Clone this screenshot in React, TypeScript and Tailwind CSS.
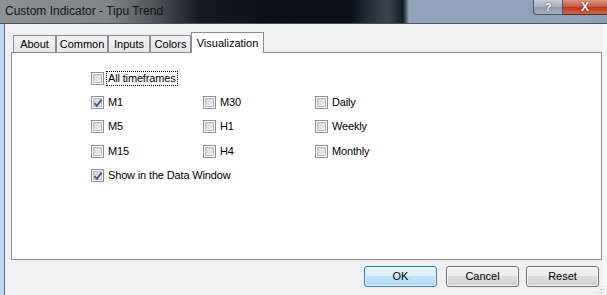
import React from "react";

const ui = { fontFamily: '"Liberation Sans", Arial, sans-serif' };

function Box({ checked }: { checked?: boolean }) {
    return (
        <span className="relative flex h-[13px] w-[13px] shrink-0 items-center justify-center border border-[#8e8f8f] bg-white">
            <span className="h-[9px] w-[9px] border border-[#b9bdc3] bg-[linear-gradient(135deg,#cfd2d7_0%,#e6e8eb_60%,#f5f5f5_100%)]" />
            {checked && (
                <svg className="absolute left-[1px] top-[1px]" width="10" height="10" viewBox="0 0 10 10">
                    <path d="M1.5 5.2 L3.8 7.8 L8.6 1.6" fill="none" stroke="#3e5591" strokeWidth="1.8" />
                </svg>
            )}
        </span>
    );
}

function Check({ label, checked, focus }: { label: string; checked?: boolean; focus?: boolean }) {
    return (
        <div className="flex items-center gap-[2px] tracking-[-0.15px]">
            <Box checked={checked} />
            <span className={focus ? "border border-dotted border-black px-[1px] leading-[13px]" : "px-[2px] leading-[13px]"}>{label}</span>
        </div>
    );
}

function Tab({ label, w }: { label: string; w: string }) {
    return (
        <div className={`${w} flex h-[17px] items-center justify-center border border-b-0 border-[#898c95] bg-[linear-gradient(#f3f3f3,#e6e6e6)] pt-px text-[11px]`}>
            {label}
        </div>
    );
}

function Btn({ label, primary }: { label: string; primary?: boolean }) {
    return (
        <div
            className={
                primary
                    ? "flex h-[21px] w-[73px] items-center justify-center rounded-[3px] border border-[#3c7fb1] bg-[linear-gradient(#ecf7fd_0%,#dcf0fc_45%,#c1e4f8_50%,#b0dbf5_100%)] text-[11px] shadow-[inset_0_0_0_1px_#dff2fc]"
                    : "flex h-[21px] w-[73px] items-center justify-center rounded-[3px] border border-[#707070] bg-[linear-gradient(#f2f2f2_0%,#ebebeb_45%,#dddddd_50%,#cfcfcf_100%)] text-[11px] shadow-[inset_0_0_0_1px_#fbfbfb]"
            }
        >
            {label}
        </div>
    );
}

export default function App() {
    return (
        <div className="relative flex h-[295px] w-[607px] flex-col overflow-hidden text-black" style={ui}>
            {/* title bar */}
            <div className="relative h-[24px] shrink-0 border-b border-[#4b4f56] bg-[linear-gradient(90deg,#8d9296_0%,#80858a_18%,#4a5056_26%,#131920_33%,#0c1118_45%,#0d121a_58%,#27313c_61%,#3a4652_64%,#141b23_66.4%,#8fa3ba_67.4%,#8da2b9_100%)]">
                <div className="pl-[5px] pt-[4px] text-[12px] leading-[15px] text-[#141414]" style={{ fontFamily: '"Liberation Sans", Arial, sans-serif' }}>
                    Custom Indicator - Tipu Trend
                </div>
                <div className="absolute right-0 top-0 flex">
                    <div className="flex h-[15px] w-[30px] items-center justify-center rounded-bl-[4px] border border-t-0 border-[#4a5563] bg-[linear-gradient(#c5ced8,#a6b1be_50%,#8f9cab_51%,#a3b0be)] text-[11px] font-bold text-white [text-shadow:0_0_2px_#333]">
                        ?
                    </div>
                    <div className="flex h-[15px] w-[44px] items-center justify-center border-b border-[#5a2a20] bg-[linear-gradient(#dc9a88,#c9563f_50%,#b8361f_51%,#d5664c)] text-[12px] font-bold text-white [text-shadow:0_0_2px_#401010]">
                        X
                    </div>
                </div>
            </div>

            <div className="flex flex-1">
                <div className="w-[4px] bg-[#b9d6f6]" />
                <div className="w-px bg-[#56667d]" />

                <div className="flex flex-1 flex-col bg-[#f0f0f0] pl-[6px] pr-px text-[11px]">
                    {/* tabs */}
                    <div className="flex h-[28px] items-end pl-[2px] pt-[8px]">
                        <Tab label="About" w="w-[43px]" />
                        <Tab label="Common" w="w-[52px]" />
                        <Tab label="Inputs" w="w-[42px]" />
                        <Tab label="Colors" w="w-[41px]" />
                        <div className="relative z-10 -mb-px flex h-[21px] w-[73px] justify-center border border-b-0 border-[#898c95] bg-white pt-[2px] text-[11px]">
                            Visualization
                        </div>
                    </div>

                    {/* panel */}
                    <div className="h-[208px] border border-[#898c95] bg-white pl-[79px] pt-[18px]">
                        <div className="flex h-[25px] items-start">
                            <Check label="All timeframes" focus />
                        </div>
                        <div className="grid grid-cols-[112px_112px_112px]">
                            <div className="h-[24px]"><Check label="M1" checked /></div>
                            <div className="h-[24px]"><Check label="M30" /></div>
                            <div className="h-[24px]"><Check label="Daily" /></div>
                            <div className="h-[25px]"><Check label="M5" /></div>
                            <div className="h-[25px]"><Check label="H1" /></div>
                            <div className="h-[25px]"><Check label="Weekly" /></div>
                            <div className="h-[24px]"><Check label="M15" /></div>
                            <div className="h-[24px]"><Check label="H4" /></div>
                            <div className="h-[24px]"><Check label="Monthly" /></div>
                        </div>
                        <Check label="Show in the Data Window" checked />
                    </div>

                    {/* buttons */}
                    <div className="flex justify-end pr-[3px] pt-[6px]">
                        <Btn label="OK" primary />
                        <div className="w-[9px]" />
                        <Btn label="Cancel" />
                        <div className="w-[7px]" />
                        <Btn label="Reset" />
                    </div>
                </div>

                <div className="w-[4px] bg-[#f9f9f9]" />
            </div>

            <svg className="absolute bottom-[1px] right-[1px]" width="10" height="10" viewBox="0 0 10 10">
                <g fill="#b8b8b8">
                    <rect x="8" y="2" width="1" height="1" />
                    <rect x="5" y="5" width="1" height="1" />
                    <rect x="8" y="5" width="1" height="1" />
                    <rect x="2" y="8" width="1" height="1" />
                    <rect x="5" y="8" width="1" height="1" />
                    <rect x="8" y="8" width="1" height="1" />
                </g>
            </svg>
        </div>
    );
}
